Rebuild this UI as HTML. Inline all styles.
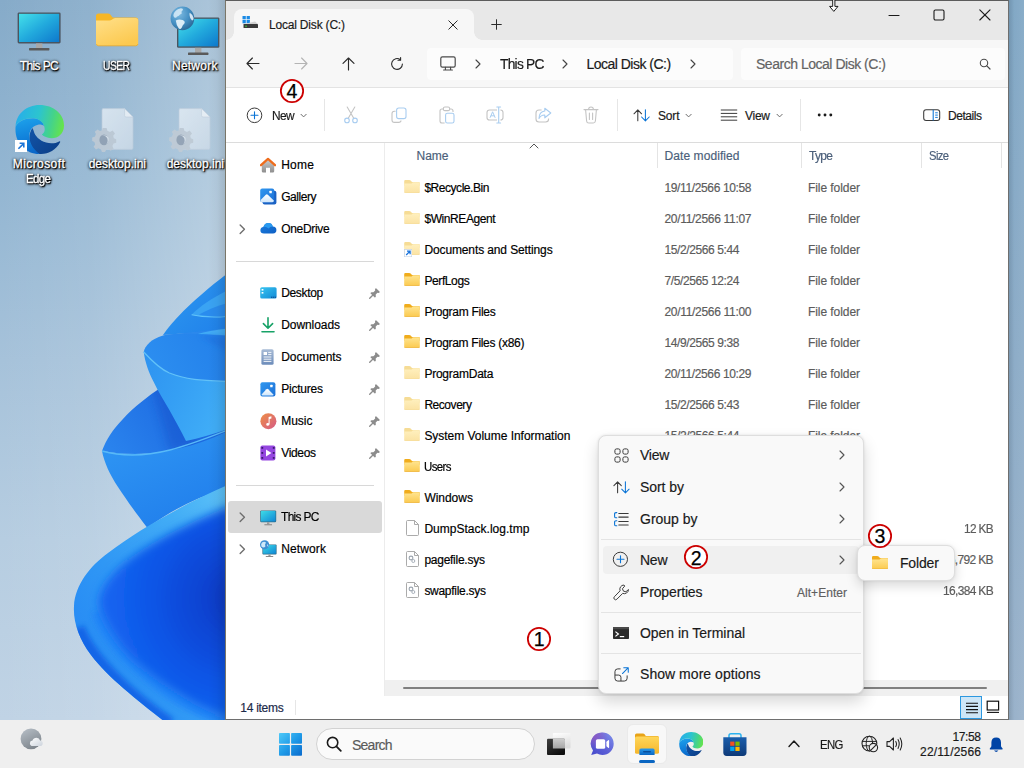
<!DOCTYPE html>
<html><head><meta charset="utf-8"><title>Local Disk (C:)</title>
<style>
html,body{margin:0;padding:0;}
body{width:1024px;height:768px;overflow:hidden;position:relative;font-family:'Liberation Sans', sans-serif;background:#9ab9d3;-webkit-text-stroke:0.18px currentColor;}
div,svg{box-sizing:border-box;}
.abs{position:absolute;}
</style></head><body>

<div class="abs" style="left:0;top:0;width:1024px;height:720px;background:linear-gradient(180deg,#86abc9 0%,#93b6d2 25%,#a6c2da 50%,#b6cde1 75%,#c0d3e5 100%);"></div>
<div class="abs" style="left:0;top:0;width:226px;height:720px;background:linear-gradient(90deg,rgba(255,255,255,0) 0%,rgba(255,255,255,0.08) 40%,rgba(255,255,255,0.33) 100%);"></div>
<svg class="abs" style="left:0;top:0" width="226" height="720" viewBox="0 0 226 720">
<defs>
<filter id="bl4" x="-20%" y="-20%" width="140%" height="140%"><feGaussianBlur stdDeviation="5"/></filter>
<filter id="bl2" x="-20%" y="-20%" width="140%" height="140%"><feGaussianBlur stdDeviation="2.5"/></filter>
<linearGradient id="pA" x1="0" y1="0" x2="1" y2="1"><stop offset="0" stop-color="#2f9af0"/><stop offset="1" stop-color="#1f80ea"/></linearGradient>
<linearGradient id="pBin" x1="0" y1="0.5" x2="1" y2="0.2"><stop offset="0" stop-color="#2c8ef0"/><stop offset="1" stop-color="#2380ea"/></linearGradient>
<linearGradient id="pBout" x1="0" y1="0" x2="1" y2="0.5"><stop offset="0" stop-color="#2e92f0"/><stop offset="0.5" stop-color="#359ff4"/><stop offset="1" stop-color="#40adf7"/></linearGradient>
<linearGradient id="pCin" x1="0" y1="0.7" x2="1" y2="0.3"><stop offset="0" stop-color="#2a84ee"/><stop offset="0.55" stop-color="#2070e4"/><stop offset="1" stop-color="#1a60d8"/></linearGradient>
<linearGradient id="pCout" x1="0" y1="0" x2="0.6" y2="1"><stop offset="0" stop-color="#3098f4"/><stop offset="1" stop-color="#217fec"/></linearGradient>
<linearGradient id="pDrim" x1="0" y1="0.75" x2="1" y2="0"><stop offset="0" stop-color="#2486f4"/><stop offset="0.35" stop-color="#2f97f5"/><stop offset="0.7" stop-color="#42adf6"/><stop offset="1" stop-color="#62c6f8"/></linearGradient>
<radialGradient id="pDin" gradientUnits="userSpaceOnUse" cx="238" cy="598" r="130"><stop offset="0" stop-color="#0836be"/><stop offset="0.32" stop-color="#0a45d4"/><stop offset="0.66" stop-color="#0d55e6"/><stop offset="1" stop-color="#1464f0"/></radialGradient>
<linearGradient id="shadow" x1="0" y1="0" x2="1" y2="0"><stop offset="0" stop-color="#000" stop-opacity="0"/><stop offset="0.5" stop-color="#000" stop-opacity="0.035"/><stop offset="1" stop-color="#000" stop-opacity="0.13"/></linearGradient>
<clipPath id="cD"><path d="M74 606 C75 585 90 566 108 553 C140 529 182 505 228 485 L228 722 L165 722 C140 702 108 678 91 655 C79 639 73 622 74 606 Z"/></clipPath>
<clipPath id="cC"><path d="M102 451 C106 440 113 429 122.5 419.4 C134 407 148 396 162 387 L205 400 L228 429 L228 436 C185 452 140 458 102 451 Z"/></clipPath>
</defs>
<!-- top petal A -->
<path d="M228 273 C212 285 192 302 178.7 316 C172 323 168 328 163 335 C185 333 207 332 228 330 Z" fill="url(#pA)"/>
<path d="M228 290 C214 297 200 306 191.6 314.7 C203 317.4 215 317.6 228 316.4 Z" fill="#3aa3f3"/>
<path d="M191.6 314.7 C203 317.4 215 317.6 228 316.4" fill="none" stroke="#63c4f9" stroke-width="1.1"/>
<path d="M228 303 C217 306 207 310 199 314.6 C208 316.6 218 316.8 228 316 Z" fill="#2a8cee"/>
<path d="M163 335 C185 333 207 331 228 328 L228 338 L170 338 Z" fill="#2b88ec"/>
<path d="M196 334.6 C206 331.6 217 329.6 228 328.6 L228 335.4 C217 334.4 206 334.2 196 334.6 Z" fill="#43acf6"/>
<!-- petal C inside (dark) -->
<g clip-path="url(#cC)">
<rect x="95" y="380" width="140" height="80" fill="url(#pCin)"/>
<path d="M150 380 L175 380 L200 445 L170 452 Z" fill="#174fc8" opacity="0.45" filter="url(#bl4)"/>
</g>
<!-- petal B outside body -->
<path d="M143.7 352 C145 362 149 373 153.7 382 C158 391 164 401 169.4 410 C175 420 181 431 186 441 C200 438 214 434 228 429 L228 381 C196 378 166 367 143.7 352 Z" fill="url(#pBout)"/>
<!-- petal B inside -->
<path d="M143.7 352 C145 346 151 339 163 335.6 C180 332.6 205 333.6 228 336.5 L228 381.4 C215 381 203 380.6 194.4 379.4 C185 378 177 376 169.4 373 C160 369 151 360 143.7 352 Z" fill="url(#pBin)"/>
<path d="M200 336 L228 337 L228 352 C218 346 208 341 200 336 Z" fill="#1d6fe0" opacity="0.55" filter="url(#bl2)"/><path d="M143.7 352 C151 360 160 369 169.4 373 C177 376 185 378 194.4 379.4 C203 380.6 215 381 228 381.4" fill="none" stroke="#62c2f8" stroke-width="1.3"/>
<!-- petal C outside body -->
<path d="M102 451 C140 458 185 452 228 431 L228 488 C195 498 168 512 147.5 528 C135 512 126 499 118 487 C110 475 104 462 102 451 Z" fill="url(#pCout)"/>
<path d="M102 451 C125 457.5 150 455 170 450 C190 445 210 437 228 430" fill="none" stroke="#58baf8" stroke-width="1.3"/>
<!-- petal D big -->
<g clip-path="url(#cD)">
<rect x="60" y="470" width="170" height="260" fill="url(#pDrim)"/>
<path d="M78 628 C90 658 124 692 170 724" fill="none" stroke="#0e58e2" stroke-width="13" opacity="0.75" filter="url(#bl2)"/>
<path d="M97 612 C106 640 138 672 176 698 C196 710 214 718 232 724" fill="none" stroke="#2384f7" stroke-width="11" opacity="0.8" filter="url(#bl2)"/>
<path d="M99 603 C100 585 118 566 142 550 C170 532 200 518 232 505 L232 722 L226 718 C212 712 200 707 191 702 C176 693 163 685 152 676 C138 665 126 654 118 642 C108 628 101 615 99 603 Z" fill="url(#pDin)" filter="url(#bl4)"/>
</g>
<rect x="208" y="0" width="18" height="720" fill="url(#shadow)"/>
</svg>
<div class="abs" style="left:1009px;top:0;width:15px;height:720px;background:linear-gradient(90deg,rgba(0,0,0,0.10),rgba(0,0,0,0) 35%),linear-gradient(90deg,rgba(255,255,255,0),rgba(255,255,255,0.08)),linear-gradient(180deg,#7fa6c4 0%,#8aaac6 50%,#97b0c9 100%);"></div>
<svg class="abs" style="left:17px;top:12px;" width="45" height="40" viewBox="0 0 45 40"><defs><linearGradient id="bpc" x1="0" y1="0" x2="1" y2="1"><stop offset="0" stop-color="#44e0ea"/><stop offset="0.5" stop-color="#22aadd"/><stop offset="1" stop-color="#0e78cc"/></linearGradient></defs><rect x="0.6" y="0.4" width="43" height="31" rx="1.4" fill="#4a5560"/><rect x="2" y="1.8" width="40.2" height="28.2" fill="url(#bpc)"/><rect x="19" y="31.4" width="6.4" height="5" fill="#a8a8a8"/><rect x="12" y="36" width="20.4" height="2.4" rx="0.6" fill="#5a5a5a"/></svg><div style="position:absolute;left:19.8px;top:57.6px;font-size:12px;line-height:16px;letter-spacing:-0.615px;color:#fff;font-weight:normal;white-space:pre;text-shadow:1px 1px 1px #000,1px 1px 2px #000,0 0 3px rgba(0,0,0,0.85),0 1px 3px rgba(0,0,0,0.8);-webkit-text-stroke:0.3px #fff;">This PC</div><svg class="abs" style="left:96px;top:13px;" width="43" height="34" viewBox="0 0 43 34"><defs><linearGradient id="uf" x1="0" y1="0" x2="0.6" y2="1"><stop offset="0" stop-color="#ffe08a"/><stop offset="1" stop-color="#fcc950"/></linearGradient></defs><path d="M0 3 Q0 0.4 2.6 0.4 H12 Q13.4 0.4 14.3 1.5 L16.6 4.6 H39.6 Q42.2 4.6 42.2 7.2 V12 H0 Z" fill="#f7b625"/><path d="M0 7.6 H13.4 Q14.8 7.6 15.8 6.8 L17.2 5.7 Q18.2 4.9 19.6 4.9 H39.6 Q42.2 5 42.2 7.6 V30.2 Q42.2 32.8 39.6 32.8 H2.6 Q0 32.8 0 30.2 Z" fill="url(#uf)"/><path d="M0.4 31 Q1 32.8 2.6 32.8 H39.6 Q41.4 32.8 42 31" fill="none" stroke="#e9a92a" stroke-width="0.8"/></svg><div style="position:absolute;left:103.0px;top:57.6px;font-size:12px;line-height:16px;letter-spacing:-0.660px;color:#fff;font-weight:normal;white-space:pre;transform:scaleX(0.8609);transform-origin:0 50%;text-shadow:1px 1px 1px #000,1px 1px 2px #000,0 0 3px rgba(0,0,0,0.85),0 1px 3px rgba(0,0,0,0.8);-webkit-text-stroke:0.3px #fff;">USER</div><svg class="abs" style="left:170px;top:6px;" width="50" height="50" viewBox="0 0 50 50"><defs><radialGradient id="gl" cx="0.35" cy="0.3" r="0.8"><stop offset="0" stop-color="#7fbce2"/><stop offset="0.55" stop-color="#4590c4"/><stop offset="1" stop-color="#27628f"/></radialGradient></defs><rect x="7" y="11.4" width="42.4" height="30.4" rx="1.4" fill="#4a5560"/><rect x="8.4" y="12.8" width="39.6" height="27.6" fill="url(#bpc)"/><rect x="25" y="41.8" width="6.4" height="5.4" fill="#a8a8a8"/><rect x="18" y="46.6" width="20.4" height="2.4" rx="0.6" fill="#5a5a5a"/><circle cx="12.4" cy="12.4" r="11.8" fill="url(#gl)"/><path d="M3.6 8 Q5.4 3.6 10 2.4 Q13.4 2 13 4 Q11 5 11.6 6.6 Q12.4 8 10 8.6 Q9 10.6 7 10.4 Q6.4 12.4 4.4 11.6 Q2.8 10 3.6 8 Z" fill="#d8ecf8" opacity="0.85"/><path d="M5.8 14.4 Q9 12.6 12.6 14 Q15.6 15.4 14.4 17.4 Q12.6 19 11.8 21.4 Q10.6 23.6 8.8 22.6 Q6.4 19.6 5.8 14.4 Z" fill="#e8f4fb" opacity="0.92"/><path d="M19.8 6.8 Q22.8 8.6 23.6 12 Q23.8 14.6 22 14.4 Q19.8 12.4 19.6 9.4 Q19.2 7.6 19.8 6.8 Z" fill="#e4f1fa" opacity="0.9"/></svg><div style="position:absolute;left:172.0px;top:57.6px;font-size:12px;line-height:16px;letter-spacing:0.231px;color:#fff;font-weight:normal;white-space:pre;text-shadow:1px 1px 1px #000,1px 1px 2px #000,0 0 3px rgba(0,0,0,0.85),0 1px 3px rgba(0,0,0,0.8);-webkit-text-stroke:0.3px #fff;">Network</div><svg class="abs" style="left:14.6px;top:105px;" width="49" height="49" viewBox="0 0 48 48"><defs>
<linearGradient id="E1" x1="0" y1="0" x2="1" y2="0.8"><stop offset="0" stop-color="#1254a8"/><stop offset="1" stop-color="#0c3f88"/></linearGradient>
<linearGradient id="E2" x1="0.3" y1="0" x2="0.5" y2="1"><stop offset="0" stop-color="#1da0ea"/><stop offset="0.5" stop-color="#1183dc"/><stop offset="1" stop-color="#0a66c8"/></linearGradient>
<linearGradient id="E3" x1="0" y1="0.4" x2="1" y2="0.55"><stop offset="0" stop-color="#27aeea"/><stop offset="0.45" stop-color="#2cc4cf"/><stop offset="0.75" stop-color="#45d389"/><stop offset="1" stop-color="#66e44a"/></linearGradient>
</defs>
<path d="M17 22.6 C15 25.5 13.6 30 14.2 34.5 C15.5 42.5 21 47.5 24 47.9 C32 48.5 40 44.5 44.2 36.5 C44.6 35.6 43.9 35.2 43.2 35.7 C40 37.6 35 38.2 30.5 36.8 C24 34.8 19.4 30 18.4 25.6 C18.1 24.4 17.6 23.4 17 22.6 Z" fill="url(#E1)"/>
<path d="M0.6 21 C3 16 10 12.6 18.5 13 C23.5 13.4 27.5 16.5 28.6 20.5 C27 19.4 24.6 18.8 22.5 19.3 C18.5 20 15.2 23 14.4 27 C13 34 16 42 24 47.9 C10 48 -1 36 0.6 21 Z" fill="url(#E2)"/>
<path d="M0.6 21 C1 9 11 0 24 0 C38 0 48 9 48 20 C48 28 42 32.5 36 32.5 C31 32.5 27.5 30.5 26.3 29 C28.5 27.5 29.5 25 29 22.5 C28.3 17 23.5 13.4 18.5 13 C10 12.6 3 16 0.6 21 Z" fill="url(#E3)"/></svg><svg class="abs" style="left:15px;top:140px;" width="12" height="12" viewBox="0 0 12 12"><rect x="0" y="0" width="12" height="12" fill="#fff"/><path d="M3.4 8.8 L8.6 3.6 M4.6 3.2 H8.8 V7.4" fill="none" stroke="#1a74d8" stroke-width="1.6"/></svg><div style="position:absolute;left:12.8px;top:156.0px;font-size:12px;line-height:16px;letter-spacing:0.414px;color:#fff;font-weight:normal;white-space:pre;text-shadow:1px 1px 1px #000,1px 1px 2px #000,0 0 3px rgba(0,0,0,0.85),0 1px 3px rgba(0,0,0,0.8);-webkit-text-stroke:0.3px #fff;">Microsoft</div><div style="position:absolute;left:26.3px;top:171.2px;font-size:12px;line-height:16px;letter-spacing:-0.660px;color:#fff;font-weight:normal;white-space:pre;transform:scaleX(0.9596);transform-origin:0 50%;text-shadow:1px 1px 1px #000,1px 1px 2px #000,0 0 3px rgba(0,0,0,0.85),0 1px 3px rgba(0,0,0,0.8);-webkit-text-stroke:0.3px #fff;">Edge</div><svg class="abs" style="left:91.6px;top:108px;" width="42" height="46" viewBox="0 0 42 46"><defs><linearGradient id="pg" x1="0" y1="0" x2="1" y2="1"><stop offset="0" stop-color="#e4edf5"/><stop offset="1" stop-color="#cddbe8"/></linearGradient></defs><g opacity="0.82"><path d="M10 2 Q10 0.6 11.4 0.6 H32.6 L41 9 V40 Q41 41.4 39.6 41.4 H11.4 Q10 41.4 10 40 Z" fill="url(#pg)" stroke="#c2cfdc" stroke-width="0.7"/><path d="M32.6 0.6 V7.6 Q32.6 9 34 9 H41 Z" fill="#f2f6fa" stroke="#c2cfdc" stroke-width="0.6"/><g transform="translate(12.6,31.3)"><path d="M-2 -11.4 H2 L2.8 -8.6 L5.4 -7.4 L8 -8.8 L10.4 -5.8 L8.6 -3.6 L9.2 -1 L11.6 0 V3.4 L9 4.2 L7.8 6.8 L9 9.4 L6 11.4 L3.8 9.8 L1.6 10.4 L0.4 12.8 H-2.6 L-3.6 10.2 L-6.2 9 L-8.6 10.2 L-11 7.4 L-9.4 5.2 L-10.2 2.6 L-12.4 1.6 V-1.8 L-9.8 -2.6 L-8.6 -5.2 L-9.8 -7.6 L-7 -9.8 L-4.8 -8.2 L-2.6 -8.8 Z" fill="#c3ccd5"/><ellipse cx="-0.6" cy="0.6" rx="4.6" ry="5.4" fill="#8f9daf"/><path d="M-3 -4 Q1 -4 2.6 -1 Q4 3 1 5.6 Q4.8 3 4.2 -1 Q3.2 -4.6 -3 -4Z" fill="#dfe6ec"/></g></g></svg><svg class="abs" style="left:169px;top:108px;" width="42" height="46" viewBox="0 0 42 46"><defs><linearGradient id="pg" x1="0" y1="0" x2="1" y2="1"><stop offset="0" stop-color="#e4edf5"/><stop offset="1" stop-color="#cddbe8"/></linearGradient></defs><g opacity="0.82"><path d="M10 2 Q10 0.6 11.4 0.6 H32.6 L41 9 V40 Q41 41.4 39.6 41.4 H11.4 Q10 41.4 10 40 Z" fill="url(#pg)" stroke="#c2cfdc" stroke-width="0.7"/><path d="M32.6 0.6 V7.6 Q32.6 9 34 9 H41 Z" fill="#f2f6fa" stroke="#c2cfdc" stroke-width="0.6"/><g transform="translate(12.6,31.3)"><path d="M-2 -11.4 H2 L2.8 -8.6 L5.4 -7.4 L8 -8.8 L10.4 -5.8 L8.6 -3.6 L9.2 -1 L11.6 0 V3.4 L9 4.2 L7.8 6.8 L9 9.4 L6 11.4 L3.8 9.8 L1.6 10.4 L0.4 12.8 H-2.6 L-3.6 10.2 L-6.2 9 L-8.6 10.2 L-11 7.4 L-9.4 5.2 L-10.2 2.6 L-12.4 1.6 V-1.8 L-9.8 -2.6 L-8.6 -5.2 L-9.8 -7.6 L-7 -9.8 L-4.8 -8.2 L-2.6 -8.8 Z" fill="#c3ccd5"/><ellipse cx="-0.6" cy="0.6" rx="4.6" ry="5.4" fill="#8f9daf"/><path d="M-3 -4 Q1 -4 2.6 -1 Q4 3 1 5.6 Q4.8 3 4.2 -1 Q3.2 -4.6 -3 -4Z" fill="#dfe6ec"/></g></g></svg><div style="position:absolute;left:88.7px;top:156.0px;font-size:12px;line-height:16px;letter-spacing:-0.008px;color:#fff;font-weight:normal;white-space:pre;text-shadow:1px 1px 1px #000,1px 1px 2px #000,0 0 3px rgba(0,0,0,0.85),0 1px 3px rgba(0,0,0,0.8);-webkit-text-stroke:0.3px #fff;">desktop.ini</div><div class="abs" style="left:160px;top:150px;width:66px;height:30px;overflow:hidden;"><div style="position:absolute;left:6.7px;top:6.0px;font-size:12px;line-height:16px;letter-spacing:-0.008px;color:#fff;font-weight:normal;white-space:pre;text-shadow:1px 1px 1px #000,1px 1px 2px #000,0 0 3px rgba(0,0,0,0.85),0 1px 3px rgba(0,0,0,0.8);-webkit-text-stroke:0.3px #fff;">desktop.ini</div></div><svg width="0" height="0" style="position:absolute"><defs>
<linearGradient id="fb" x1="0" y1="0" x2="0" y2="1"><stop offset="0" stop-color="#ffe592"/><stop offset="1" stop-color="#fbca50"/></linearGradient>
<linearGradient id="fbh" x1="0" y1="0" x2="0" y2="1"><stop offset="0" stop-color="#fff0bf"/><stop offset="1" stop-color="#fbe3a4"/></linearGradient>
</defs></svg><div class="abs" style="left:225px;top:0;width:784px;height:720px;background:#fff;border:1px solid #6e6e6e;border-top-color:#5c5c5c;border-left-color:#7a7668;"></div><div class="abs" style="left:226px;top:1px;width:782px;height:39px;background:#e8e8e8;"></div><div class="abs" style="left:234px;top:9px;width:240px;height:31px;background:#f7f7f7;border-radius:8px 8px 0 0;"></div><div class="abs" style="left:226px;top:32px;width:8px;height:8px;background:radial-gradient(circle at 0 0,#e8e8e8 7.5px,#f7f7f7 8px);"></div><div class="abs" style="left:474px;top:32px;width:8px;height:8px;background:radial-gradient(circle at 100% 0,#e8e8e8 7.5px,#f7f7f7 8px);"></div><svg class="abs" style="left:242px;top:15px;" width="17" height="14" viewBox="0 0 17 14"><rect x="0.5" y="1" width="3.3" height="3.3" fill="#1a8ae5"/><rect x="4.6" y="1" width="3.3" height="3.3" fill="#1a8ae5"/><rect x="0.5" y="5" width="3.3" height="3.3" fill="#1a8ae5"/><rect x="4.6" y="5" width="3.3" height="3.3" fill="#1a8ae5"/><path d="M2 9 L13 6.5 L16 9 Z" fill="#d0d0d0"/><rect x="1.5" y="9" width="14.5" height="4" rx="0.6" fill="#3a3a3a"/><rect x="3.2" y="10.6" width="1.6" height="1.2" fill="#35d03a"/></svg><div style="position:absolute;left:269.0px;top:16.5px;font-size:12px;line-height:16px;letter-spacing:-0.192px;color:#1a1a1a;font-weight:normal;white-space:pre;">Local Disk (C:)</div><svg class="abs" style="left:447.5px;top:19.5px;" width="10" height="10" viewBox="0 0 10 10"><path d="M0.8 0.8 L9.2 9.2 M9.2 0.8 L0.8 9.2" stroke="#2b2b2b" stroke-width="1" stroke-linecap="round"/></svg><svg class="abs" style="left:491px;top:19.4px;" width="11" height="11" viewBox="0 0 11 11"><path d="M5.5 0.7 V10.3 M0.7 5.5 H10.3" stroke="#2b2b2b" stroke-width="1" stroke-linecap="round"/></svg><svg class="abs" style="left:888px;top:10px;" width="12" height="12" viewBox="0 0 12 12"><path d="M1 5.5 H11" stroke="#1a1a1a" stroke-width="1.1" stroke-linecap="round"/></svg><svg class="abs" style="left:933px;top:9px;" width="12" height="12" viewBox="0 0 12 12"><rect x="1" y="1" width="10" height="10" rx="1.4" fill="none" stroke="#1a1a1a" stroke-width="1.1"/></svg><svg class="abs" style="left:979px;top:9px;" width="12" height="12" viewBox="0 0 12 12"><path d="M0.8 0.8 L11 11 M11 0.8 L0.8 11" stroke="#1a1a1a" stroke-width="1.1" stroke-linecap="round"/></svg><svg class="abs" style="left:828px;top:0px;" width="12" height="13" viewBox="0 0 12 13"><path d="M4.7 -1 L4.7 6.4 L1.6 6.4 L5.8 11.4 L10 6.4 L6.9 6.4 L6.9 -1 Z" fill="#fff" stroke="#111" stroke-width="0.95"/></svg><div class="abs" style="left:226px;top:40px;width:782px;height:47px;background:#f7f7f7;"></div><div class="abs" style="left:226px;top:87px;width:782px;height:1px;background:#e3e3e3;"></div><svg class="abs" style="left:246px;top:57px;" width="14" height="13" viewBox="0 0 14 13"><path d="M13 6.5 H1.2 M6.4 1 L1 6.5 L6.4 12" fill="none" stroke="#2a2a2a" stroke-width="1.15" stroke-linecap="round" stroke-linejoin="round"/></svg><svg class="abs" style="left:294px;top:57px;" width="14" height="13" viewBox="0 0 14 13"><path d="M1 6.5 H12.8 M7.6 1 L13 6.5 L7.6 12" fill="none" stroke="#b4b4b4" stroke-width="1.15" stroke-linecap="round" stroke-linejoin="round"/></svg><svg class="abs" style="left:342px;top:57px;" width="13" height="14" viewBox="0 0 13 14"><path d="M6.5 13 V1.2 M1 6.4 L6.5 1 L12 6.4" fill="none" stroke="#2a2a2a" stroke-width="1.15" stroke-linecap="round" stroke-linejoin="round"/></svg><svg class="abs" style="left:390px;top:57px;" width="14" height="14" viewBox="0 0 14 14"><path d="M12.4 7 A5.4 5.4 0 1 1 10.3 2.7" fill="none" stroke="#2a2a2a" stroke-width="1.1" stroke-linecap="round"/><path d="M10.6 0.6 L10.6 3.2 L8 3.2" fill="none" stroke="#2a2a2a" stroke-width="1.1" stroke-linecap="round" stroke-linejoin="round"/></svg><div class="abs" style="left:427px;top:48px;width:306px;height:32px;background:#fcfcfc;border-radius:4px;"></div><div class="abs" style="left:741px;top:48px;width:264px;height:32px;background:#fcfcfc;border-radius:4px;"></div><svg class="abs" style="left:440px;top:56px;" width="16" height="15" viewBox="0 0 16 15"><rect x="0.8" y="0.8" width="14.4" height="10.4" rx="1.6" fill="none" stroke="#4a4a4a" stroke-width="1.2"/><path d="M5.4 11.4 V13.6 M10.6 11.4 V13.6 M3.6 14 H12.4" stroke="#4a4a4a" stroke-width="1.1" fill="none" stroke-linecap="round"/></svg><svg class="abs" style="left:473.5px;top:59px;" width="8" height="10" viewBox="0 0 8 10"><path d="M2.0 1 L6.0 5 L2.0 9" fill="none" stroke="#444" stroke-width="1.1" stroke-linecap="round" stroke-linejoin="round"/></svg><div style="position:absolute;left:500.0px;top:55.0px;font-size:14px;line-height:18px;letter-spacing:-0.770px;color:#1a1a1a;font-weight:normal;white-space:pre;transform:scaleX(0.9850);transform-origin:0 50%;">This PC</div><svg class="abs" style="left:560.8px;top:59px;" width="8" height="10" viewBox="0 0 8 10"><path d="M2.0 1 L6.0 5 L2.0 9" fill="none" stroke="#444" stroke-width="1.1" stroke-linecap="round" stroke-linejoin="round"/></svg><div style="position:absolute;left:586.5px;top:55.0px;font-size:14px;line-height:18px;letter-spacing:-0.514px;color:#1a1a1a;font-weight:normal;white-space:pre;">Local Disk (C:)</div><svg class="abs" style="left:689px;top:59px;" width="8" height="10" viewBox="0 0 8 10"><path d="M2.0 1 L6.0 5 L2.0 9" fill="none" stroke="#444" stroke-width="1.1" stroke-linecap="round" stroke-linejoin="round"/></svg><div style="position:absolute;left:756.0px;top:55.0px;font-size:14px;line-height:18px;letter-spacing:-0.478px;color:#636363;font-weight:normal;white-space:pre;">Search Local Disk (C:)</div><svg class="abs" style="left:979px;top:58px;" width="12" height="12" viewBox="0 0 12 12"><circle cx="5" cy="5" r="3.7" fill="none" stroke="#4a4a4a" stroke-width="1.1"/><path d="M7.8 7.8 L11 11" stroke="#4a4a4a" stroke-width="1.2" stroke-linecap="round"/></svg><div class="abs" style="left:226px;top:142px;width:782px;height:1px;background:#dcdcdc;"></div><svg class="abs" style="left:246px;top:107px;" width="17" height="17" viewBox="0 0 17 17"><circle cx="8.5" cy="8.3" r="7.3" fill="none" stroke="#3a3a3a" stroke-width="1"/><path d="M8.5 4.8 V11.8 M5 8.3 H12" stroke="#0a74d6" stroke-width="1.1" stroke-linecap="round"/></svg><div style="position:absolute;left:272.0px;top:107.5px;font-size:12px;line-height:16px;letter-spacing:-0.660px;color:#1a1a1a;font-weight:normal;white-space:pre;transform:scaleX(0.9914);transform-origin:0 50%;">New</div><svg class="abs" style="left:300.4px;top:112.9px;" width="7.2" height="5.2" viewBox="0 0 7.2 5.2"><path d="M1 1.3 L3.6 3.9000000000000004 L6.2 1.3" fill="none" stroke="#6a6a6a" stroke-width="1" stroke-linecap="round" stroke-linejoin="round"/></svg><div class="abs" style="left:324px;top:99px;width:1px;height:32px;background:#e6e6e6;"></div><svg class="abs" style="left:343px;top:106px;" width="16" height="18" viewBox="0 0 16 18"><path d="M4.2 1 L10.6 12 M11.8 1 L5.4 12" stroke="#c4c4c4" stroke-width="1.1" stroke-linecap="round"/><circle cx="4" cy="14.4" r="2.3" fill="none" stroke="#a9cdf0" stroke-width="1.1"/><circle cx="12" cy="14.4" r="2.3" fill="none" stroke="#a9cdf0" stroke-width="1.1"/></svg><svg class="abs" style="left:391px;top:107px;" width="16" height="17" viewBox="0 0 16 17"><path d="M4.6 4.2 H3.4 Q1 4.2 1 6.6 V13 Q1 15.4 3.4 15.4 H7.6 Q10 15.4 10 13.6" fill="none" stroke="#c4c4c4" stroke-width="1.1"/><rect x="5.6" y="1" width="9.4" height="10.6" rx="2.2" fill="none" stroke="#a9cdf0" stroke-width="1.1"/></svg><svg class="abs" style="left:439px;top:106px;" width="16" height="18" viewBox="0 0 16 18"><path d="M4.4 3 H3 Q1 3 1 5 V15 Q1 17 3 17 H5.6" fill="none" stroke="#c4c4c4" stroke-width="1.1"/><path d="M10.6 3 H12 Q14 3 14 5 V6" fill="none" stroke="#c4c4c4" stroke-width="1.1"/><rect x="4.4" y="1" width="6.2" height="3.6" rx="1.4" fill="none" stroke="#c4c4c4" stroke-width="1.1"/><rect x="6.6" y="7.2" width="8.4" height="9.8" rx="1.8" fill="none" stroke="#a9cdf0" stroke-width="1.1"/></svg><svg class="abs" style="left:486px;top:106px;" width="18" height="18" viewBox="0 0 18 18"><path d="M11 4 H3.6 Q1 4 1 6.6 V11.4 Q1 14 3.6 14 H11 M14.4 4 Q17 4 17 6.6 V11.4 Q17 14 14.4 14" fill="none" stroke="#c4c4c4" stroke-width="1.1"/><path d="M12.7 1.4 V16.6 M10.8 1 H14.6 M10.8 17 H14.6" stroke="#a9cdf0" stroke-width="1.1" fill="none" stroke-linecap="round"/><path d="M4 11.8 L6.6 5.8 L9.2 11.8 M4.9 9.8 H8.3" fill="none" stroke="#a9cdf0" stroke-width="1"/></svg><svg class="abs" style="left:535px;top:107px;" width="17" height="16" viewBox="0 0 17 16"><path d="M6.6 3 H4 Q1 3 1 6 V12 Q1 15 4 15 H10.6 Q13.6 15 13.6 12 V11.4" fill="none" stroke="#c4c4c4" stroke-width="1.1"/><path d="M9.8 1.2 L15.8 6 L9.8 10.8 V8 Q6 7.8 4 11.4 Q4.2 4.6 9.8 4 Z" fill="none" stroke="#a9cdf0" stroke-width="1.1" stroke-linejoin="round"/></svg><svg class="abs" style="left:583px;top:106px;" width="16" height="18" viewBox="0 0 16 18"><path d="M1 3.6 H15 M5.6 3.4 Q5.6 1 8 1 Q10.4 1 10.4 3.4 M2.6 3.8 L3.6 15 Q3.8 17 5.8 17 H10.2 Q12.2 17 12.4 15 L13.4 3.8 M6.4 7 V13.4 M9.6 7 V13.4" fill="none" stroke="#c4c4c4" stroke-width="1.1" stroke-linecap="round"/></svg><div class="abs" style="left:617px;top:99px;width:1px;height:32px;background:#e6e6e6;"></div><svg class="abs" style="left:633px;top:109.4px;" width="18" height="13" viewBox="0 0 18 13"><path d="M4.8 11.8 V1.2 M1 4.8 L4.8 0.9 L8.6 4.8" fill="none" stroke="#3a3a3a" stroke-width="1.05" stroke-linecap="round" stroke-linejoin="round"/><path d="M12.4 0.8 V11.6 M8.6 8 L12.4 11.9 L16.2 8" fill="none" stroke="#0a74d6" stroke-width="1.05" stroke-linecap="round" stroke-linejoin="round"/></svg><div style="position:absolute;left:658.0px;top:107.5px;font-size:12px;line-height:16px;letter-spacing:-0.172px;color:#1a1a1a;font-weight:normal;white-space:pre;">Sort</div><svg class="abs" style="left:685.4px;top:112.9px;" width="7.2" height="5.2" viewBox="0 0 7.2 5.2"><path d="M1 1.3 L3.6 3.9000000000000004 L6.2 1.3" fill="none" stroke="#6a6a6a" stroke-width="1" stroke-linecap="round" stroke-linejoin="round"/></svg><svg class="abs" style="left:720px;top:109px;" width="18" height="12" viewBox="0 0 18 12"><path d="M0.8 1 H17.2 M0.8 4.4 H17.2 M0.8 7.8 H17.2 M0.8 11.2 H17.2" stroke="#3a3a3a" stroke-width="1"/></svg><div style="position:absolute;left:745.0px;top:107.5px;font-size:12px;line-height:16px;letter-spacing:-0.266px;color:#1a1a1a;font-weight:normal;white-space:pre;">View</div><svg class="abs" style="left:776.1px;top:112.9px;" width="7.2" height="5.2" viewBox="0 0 7.2 5.2"><path d="M1 1.3 L3.6 3.9000000000000004 L6.2 1.3" fill="none" stroke="#6a6a6a" stroke-width="1" stroke-linecap="round" stroke-linejoin="round"/></svg><div class="abs" style="left:800px;top:99px;width:1px;height:32px;background:#e6e6e6;"></div><svg class="abs" style="left:817px;top:113.4px;" width="16" height="4" viewBox="0 0 16 4"><circle cx="2.2" cy="2" r="1.45" fill="#1a1a1a"/><circle cx="8" cy="2" r="1.45" fill="#1a1a1a"/><circle cx="13.8" cy="2" r="1.45" fill="#1a1a1a"/></svg><svg class="abs" style="left:922.6px;top:109.4px;" width="18" height="12.4" viewBox="0 0 18 12.4"><rect x="0.7" y="0.7" width="16" height="10.8" rx="2.4" fill="none" stroke="#3a3a3a" stroke-width="1.05"/><path d="M10.2 0.8 V11.4" stroke="#0a74d6" stroke-width="1.05"/><path d="M12.2 3.8 H14.8 M12.2 6.1 H14.8 M12.2 8.4 H14.8" stroke="#0a74d6" stroke-width="0.95"/></svg><div style="position:absolute;left:948.0px;top:107.5px;font-size:12px;line-height:16px;letter-spacing:-0.448px;color:#1a1a1a;font-weight:normal;white-space:pre;">Details</div><div class="abs" style="left:384px;top:143px;width:1px;height:553px;background:#ececec;"></div><div class="abs" style="left:228px;top:501px;width:154px;height:32px;background:#d9d9d9;border-radius:3px;"></div><div class="abs" style="left:236px;top:261px;width:138px;height:1px;background:#d8d8d8;"></div><div class="abs" style="left:236px;top:485px;width:138px;height:1px;background:#d8d8d8;"></div><div style="position:absolute;left:281.2px;top:156.5px;font-size:12px;line-height:16px;letter-spacing:0.261px;color:#000;font-weight:normal;white-space:pre;">Home</div><div style="position:absolute;left:281.2px;top:188.5px;font-size:12px;line-height:16px;letter-spacing:-0.436px;color:#000;font-weight:normal;white-space:pre;">Gallery</div><div style="position:absolute;left:281.2px;top:220.5px;font-size:12px;line-height:16px;letter-spacing:-0.312px;color:#000;font-weight:normal;white-space:pre;">OneDrive</div><div style="position:absolute;left:281.2px;top:284.5px;font-size:12px;line-height:16px;letter-spacing:-0.339px;color:#000;font-weight:normal;white-space:pre;">Desktop</div><div style="position:absolute;left:281.2px;top:316.5px;font-size:12px;line-height:16px;letter-spacing:-0.072px;color:#000;font-weight:normal;white-space:pre;">Downloads</div><div style="position:absolute;left:281.2px;top:348.5px;font-size:12px;line-height:16px;letter-spacing:-0.038px;color:#000;font-weight:normal;white-space:pre;">Documents</div><div style="position:absolute;left:281.2px;top:380.5px;font-size:12px;line-height:16px;letter-spacing:-0.237px;color:#000;font-weight:normal;white-space:pre;">Pictures</div><div style="position:absolute;left:281.2px;top:412.5px;font-size:12px;line-height:16px;letter-spacing:-0.011px;color:#000;font-weight:normal;white-space:pre;">Music</div><div style="position:absolute;left:281.2px;top:444.5px;font-size:12px;line-height:16px;letter-spacing:-0.337px;color:#000;font-weight:normal;white-space:pre;">Videos</div><div style="position:absolute;left:281.2px;top:508.5px;font-size:12px;line-height:16px;letter-spacing:-0.660px;color:#000;font-weight:normal;white-space:pre;transform:scaleX(0.9941);transform-origin:0 50%;">This PC</div><div style="position:absolute;left:281.2px;top:540.5px;font-size:12px;line-height:16px;letter-spacing:0.131px;color:#000;font-weight:normal;white-space:pre;">Network</div><svg class="abs" style="left:368.5px;top:287.5px;" width="11" height="11" viewBox="0 0 11 11"><path d="M6.4 0.5 Q6.9 0 7.4 0.5 L10.5 3.6 Q11 4.1 10.5 4.6 L9.6 5 L8.5 4.8 L6.7 6.6 L6.8 8.4 Q6.8 9 6.3 9.3 L5.7 9.6 L1.4 5.3 L1.7 4.7 Q2 4.2 2.6 4.2 L4.4 4.3 L6.2 2.5 L6 1.4 Z" fill="#8c8c8c"/><path d="M3.7 7.3 L0.7 10.3" stroke="#8c8c8c" stroke-width="1.3" stroke-linecap="round"/></svg><svg class="abs" style="left:368.5px;top:319.5px;" width="11" height="11" viewBox="0 0 11 11"><path d="M6.4 0.5 Q6.9 0 7.4 0.5 L10.5 3.6 Q11 4.1 10.5 4.6 L9.6 5 L8.5 4.8 L6.7 6.6 L6.8 8.4 Q6.8 9 6.3 9.3 L5.7 9.6 L1.4 5.3 L1.7 4.7 Q2 4.2 2.6 4.2 L4.4 4.3 L6.2 2.5 L6 1.4 Z" fill="#8c8c8c"/><path d="M3.7 7.3 L0.7 10.3" stroke="#8c8c8c" stroke-width="1.3" stroke-linecap="round"/></svg><svg class="abs" style="left:368.5px;top:351.5px;" width="11" height="11" viewBox="0 0 11 11"><path d="M6.4 0.5 Q6.9 0 7.4 0.5 L10.5 3.6 Q11 4.1 10.5 4.6 L9.6 5 L8.5 4.8 L6.7 6.6 L6.8 8.4 Q6.8 9 6.3 9.3 L5.7 9.6 L1.4 5.3 L1.7 4.7 Q2 4.2 2.6 4.2 L4.4 4.3 L6.2 2.5 L6 1.4 Z" fill="#8c8c8c"/><path d="M3.7 7.3 L0.7 10.3" stroke="#8c8c8c" stroke-width="1.3" stroke-linecap="round"/></svg><svg class="abs" style="left:368.5px;top:383.5px;" width="11" height="11" viewBox="0 0 11 11"><path d="M6.4 0.5 Q6.9 0 7.4 0.5 L10.5 3.6 Q11 4.1 10.5 4.6 L9.6 5 L8.5 4.8 L6.7 6.6 L6.8 8.4 Q6.8 9 6.3 9.3 L5.7 9.6 L1.4 5.3 L1.7 4.7 Q2 4.2 2.6 4.2 L4.4 4.3 L6.2 2.5 L6 1.4 Z" fill="#8c8c8c"/><path d="M3.7 7.3 L0.7 10.3" stroke="#8c8c8c" stroke-width="1.3" stroke-linecap="round"/></svg><svg class="abs" style="left:368.5px;top:415.5px;" width="11" height="11" viewBox="0 0 11 11"><path d="M6.4 0.5 Q6.9 0 7.4 0.5 L10.5 3.6 Q11 4.1 10.5 4.6 L9.6 5 L8.5 4.8 L6.7 6.6 L6.8 8.4 Q6.8 9 6.3 9.3 L5.7 9.6 L1.4 5.3 L1.7 4.7 Q2 4.2 2.6 4.2 L4.4 4.3 L6.2 2.5 L6 1.4 Z" fill="#8c8c8c"/><path d="M3.7 7.3 L0.7 10.3" stroke="#8c8c8c" stroke-width="1.3" stroke-linecap="round"/></svg><svg class="abs" style="left:368.5px;top:447.5px;" width="11" height="11" viewBox="0 0 11 11"><path d="M6.4 0.5 Q6.9 0 7.4 0.5 L10.5 3.6 Q11 4.1 10.5 4.6 L9.6 5 L8.5 4.8 L6.7 6.6 L6.8 8.4 Q6.8 9 6.3 9.3 L5.7 9.6 L1.4 5.3 L1.7 4.7 Q2 4.2 2.6 4.2 L4.4 4.3 L6.2 2.5 L6 1.4 Z" fill="#8c8c8c"/><path d="M3.7 7.3 L0.7 10.3" stroke="#8c8c8c" stroke-width="1.3" stroke-linecap="round"/></svg><svg class="abs" style="left:238.29999999999998px;top:224.0px;" width="8.6" height="10.6" viewBox="0 0 8.6 10.6"><path d="M2.15 1 L6.449999999999999 5.3 L2.15 9.6" fill="none" stroke="#6e6e6e" stroke-width="1.35" stroke-linecap="round" stroke-linejoin="round"/></svg><svg class="abs" style="left:238.29999999999998px;top:512.0px;" width="8.6" height="10.6" viewBox="0 0 8.6 10.6"><path d="M2.15 1 L6.449999999999999 5.3 L2.15 9.6" fill="none" stroke="#6e6e6e" stroke-width="1.35" stroke-linecap="round" stroke-linejoin="round"/></svg><svg class="abs" style="left:238.29999999999998px;top:544.0px;" width="8.6" height="10.6" viewBox="0 0 8.6 10.6"><path d="M2.15 1 L6.449999999999999 5.3 L2.15 9.6" fill="none" stroke="#6e6e6e" stroke-width="1.35" stroke-linecap="round" stroke-linejoin="round"/></svg><svg class="abs" style="left:260px;top:157px;" width="16" height="16" viewBox="0 0 16 16"><defs><linearGradient id="hg" x1="0" y1="0" x2="0" y2="1"><stop offset="0" stop-color="#c9c9c9"/><stop offset="1" stop-color="#8e8e8e"/></linearGradient></defs><path d="M1.8 8 V14.2 Q1.8 15.6 3.2 15.6 H6 V10.8 H10 V15.6 H12.8 Q14.2 15.6 14.2 14.2 V8 L8 3 Z" fill="url(#hg)"/><path d="M1 8.2 L8 1.9 L15 8.2" fill="none" stroke="#ee6c1c" stroke-width="2.3" stroke-linecap="round" stroke-linejoin="round"/></svg><svg class="abs" style="left:260px;top:188px;" width="17" height="17" viewBox="0 0 17 17"><rect x="2.6" y="2.8" width="13.8" height="13.6" rx="2" fill="#1a62c4"/><rect x="0.2" y="0.4" width="14" height="13.8" rx="2" fill="url(#pi)"/><path d="M0.4 12.2 L5.8 6.8 Q6.8 5.8 7.8 6.8 L14 12.8 Q13.8 14.2 12.4 14.2 H2.2 Q0.6 14.2 0.4 12.2 Z" fill="url(#mt)"/><rect x="9.4" y="2.8" width="2.4" height="2.4" rx="0.5" fill="#fff"/></svg><svg class="abs" style="left:260px;top:222px;" width="17" height="12" viewBox="0 0 17 12"><defs><linearGradient id="od" x1="0" y1="0" x2="1" y2="1"><stop offset="0" stop-color="#1b7fe0"/><stop offset="1" stop-color="#0f5fc4"/></linearGradient></defs><path d="M4 11.4 Q0.4 11.4 0.4 8.2 Q0.4 5.4 3.4 5 Q4.6 1 8.4 1 Q11.8 1 12.8 4.4 Q16.4 4.6 16.4 8 Q16.4 11.4 13 11.4 Z" fill="url(#od)"/><path d="M3.4 5 Q4.6 1 8.4 1 Q11.8 1 12.8 4.4 Q10 4.4 8.6 6.6 Q6 4.2 3.4 5Z" fill="#2a9af0"/></svg><svg class="abs" style="left:260px;top:287px;" width="17" height="12" viewBox="0 0 17 12"><defs><linearGradient id="dk" x1="0" y1="0" x2="1" y2="1"><stop offset="0" stop-color="#38c4f0"/><stop offset="1" stop-color="#118ad6"/></linearGradient></defs><rect x="0.2" y="0.2" width="16.4" height="11.4" rx="1.6" fill="url(#dk)"/><rect x="1.6" y="2" width="1.8" height="1.6" fill="#fff"/><rect x="1.6" y="5" width="1.8" height="1.6" fill="#fff"/><rect x="11" y="9.6" width="1.4" height="1.4" fill="#0b5aa0"/><rect x="13" y="9.6" width="1.4" height="1.4" fill="#0b5aa0"/><rect x="15" y="9.6" width="1" height="1.4" fill="#0b5aa0"/></svg><svg class="abs" style="left:261px;top:317px;" width="14" height="16" viewBox="0 0 14 16"><path d="M7 0.8 V11 M2.4 6.6 L7 11.2 L11.6 6.6" fill="none" stroke="#17a267" stroke-width="1.6" stroke-linecap="round" stroke-linejoin="round"/><path d="M1 14.8 H13" stroke="#17a267" stroke-width="1.6" stroke-linecap="round"/></svg><svg class="abs" style="left:261px;top:349px;" width="13" height="16" viewBox="0 0 13 16"><defs><linearGradient id="dc" x1="0" y1="0" x2="0" y2="1"><stop offset="0" stop-color="#a9bcd6"/><stop offset="1" stop-color="#6c8cba"/></linearGradient></defs><rect x="0.4" y="0.2" width="12.2" height="15.6" rx="1.6" fill="url(#dc)"/><rect x="2.6" y="3" width="3.4" height="3" fill="#fff"/><path d="M7.2 3.4 H10.4 M7.2 5.6 H10.4 M2.6 8 H10.4 M2.6 10.2 H10.4 M2.6 12.4 H10.4" stroke="#fff" stroke-width="0.9"/></svg><svg class="abs" style="left:260px;top:382px;" width="16" height="15" viewBox="0 0 16 15"><defs><linearGradient id="pi" x1="0" y1="0" x2="1" y2="1"><stop offset="0" stop-color="#3198f0"/><stop offset="1" stop-color="#1a6fd6"/></linearGradient><linearGradient id="mt" x1="0" y1="0" x2="0" y2="1"><stop offset="0" stop-color="#ffffff"/><stop offset="1" stop-color="#cfe6fb"/></linearGradient></defs><rect x="0.4" y="0.2" width="15" height="14.4" rx="2" fill="url(#pi)"/><path d="M1.6 12.4 L6.4 7.2 Q7.3 6.3 8.2 7.2 L13.6 12.8 Q13.4 13.4 12.6 13.4 H2.6 Q1.6 13.4 1.6 12.4 Z" fill="url(#mt)"/><rect x="10.2" y="2.8" width="2.4" height="2.4" rx="0.5" fill="#fff"/></svg><svg class="abs" style="left:259.5px;top:412.5px;" width="17" height="17" viewBox="0 0 17 17"><defs><linearGradient id="mu" x1="0" y1="0" x2="1" y2="1"><stop offset="0" stop-color="#ee8f45"/><stop offset="1" stop-color="#d55a86"/></linearGradient></defs><circle cx="8.4" cy="8.2" r="8" fill="url(#mu)"/><path d="M8.6 4 L11.4 3.2 V5.4 L9.6 6 V11 Q9.6 12.8 7.8 12.8 Q6.2 12.8 6.2 11.4 Q6.2 10 7.8 10 Q8.2 10 8.6 10.2 Z" fill="#fff"/></svg><svg class="abs" style="left:260px;top:445px;" width="16" height="16" viewBox="0 0 16 16"><rect x="0.4" y="0.4" width="15" height="15.2" rx="2" fill="#9547e0"/><path d="M6 4.6 L11.4 8 L6 11.4 Z" fill="#fff"/><rect x="1.4" y="2" width="1.8" height="1.8" fill="#3b1a70"/><rect x="1.4" y="7" width="1.8" height="1.8" fill="#3b1a70"/><rect x="1.4" y="12" width="1.8" height="1.8" fill="#3b1a70"/><rect x="12.8" y="2" width="1.8" height="1.8" fill="#3b1a70"/><rect x="12.8" y="7" width="1.8" height="1.8" fill="#3b1a70"/><rect x="12.8" y="12" width="1.8" height="1.8" fill="#3b1a70"/></svg><svg class="abs" style="left:260px;top:509.8px;" width="17" height="16" viewBox="0 0 17 16"><defs><linearGradient id="pc" x1="0" y1="0" x2="1" y2="1"><stop offset="0" stop-color="#3ddbe6"/><stop offset="1" stop-color="#0f86d6"/></linearGradient></defs><rect x="0.2" y="0.4" width="16" height="11.8" rx="1.2" fill="#2f6f8a"/><rect x="0.9" y="1.1" width="14.6" height="10.4" rx="0.6" fill="url(#pc)"/><rect x="7" y="12.2" width="2.4" height="2.2" fill="#9a9a9a"/><rect x="4.4" y="14.2" width="7.6" height="1.1" fill="#8a8a8a"/></svg><svg class="abs" style="left:260px;top:540px;" width="17" height="17" viewBox="0 0 17 17"><rect x="2.4" y="4.4" width="14.2" height="10" rx="1" fill="#2f6f8a"/><rect x="3.1" y="5.1" width="12.8" height="8.6" rx="0.5" fill="url(#pc)"/><rect x="8.4" y="14.4" width="2.2" height="1.8" fill="#9a9a9a"/><rect x="5.8" y="16" width="7.4" height="1" fill="#8a8a8a"/><circle cx="4.6" cy="4.8" r="4.6" fill="#3f8fd2"/><path d="M2 2.4 Q4.4 0.8 6 2.6 Q4.4 4.6 5.4 6.4 Q3.6 8.6 1.4 6.4 Q0.6 4 2 2.4 Z" fill="#cfe8f8"/><path d="M7 4 Q8.6 5 8.4 7 Q7 6.4 7 4Z" fill="#cfe8f8"/></svg><div style="position:absolute;left:416.5px;top:147.5px;font-size:12px;line-height:16px;letter-spacing:-0.005px;color:#4b5f7a;font-weight:normal;white-space:pre;">Name</div><div style="position:absolute;left:664.5px;top:147.5px;font-size:12px;line-height:16px;letter-spacing:0.079px;color:#4b5f7a;font-weight:normal;white-space:pre;">Date modified</div><div style="position:absolute;left:808.5px;top:147.5px;font-size:12px;line-height:16px;letter-spacing:-0.660px;color:#4b5f7a;font-weight:normal;white-space:pre;transform:scaleX(0.9985);transform-origin:0 50%;">Type</div><div style="position:absolute;left:928.5px;top:147.5px;font-size:12px;line-height:16px;letter-spacing:-0.660px;color:#4b5f7a;font-weight:normal;white-space:pre;transform:scaleX(0.9362);transform-origin:0 50%;">Size</div><div class="abs" style="left:657px;top:143px;width:1px;height:25px;background:#e4e4e4;"></div><div class="abs" style="left:801px;top:143px;width:1px;height:25px;background:#e4e4e4;"></div><div class="abs" style="left:921px;top:143px;width:1px;height:25px;background:#e4e4e4;"></div><div class="abs" style="left:1001px;top:143px;width:1px;height:25px;background:#e4e4e4;"></div><svg class="abs" style="left:529px;top:143px;" width="10" height="6" viewBox="0 0 10 6"><path d="M1 5 L5 1 L9 5" fill="none" stroke="#555" stroke-width="1" stroke-linecap="round" stroke-linejoin="round"/></svg><svg class="abs" style="left:404px;top:180.2px;" width="16" height="12.7" viewBox="0 0 16 13"><path d="M0 1.2 Q0 0 1.2 0 L5.2 0 Q6 0 6.6 0.6 L8 2 L14.8 2 Q16 2 16 3.2 L16 6 L0 6 Z" fill="#f6dc95"/><path d="M0 3.6 L7 3.6 Q7.6 3.6 8.2 3 L8.6 2.6 Q9 2.2 9.6 2.2 L14.8 2.2 Q16 2.2 16 3.4 L16 11.8 Q16 13 14.8 13 L1.2 13 Q0 13 0 11.8 Z" fill="url(#fbh)"/><path d="M0.2 12.2 Q0.5 13 1.2 13 L14.8 13 Q15.5 13 15.8 12.2" fill="none" stroke="#f3d588" stroke-width="0.7"/></svg><div style="position:absolute;left:424.4px;top:179.5px;font-size:12px;line-height:16px;letter-spacing:-0.457px;color:#000;font-weight:normal;white-space:pre;">$Recycle.Bin</div><div style="position:absolute;left:664.5px;top:179.5px;font-size:12px;line-height:16px;letter-spacing:-0.369px;color:#5c5c5c;font-weight:normal;white-space:pre;">19/11/2566 10:58</div><div style="position:absolute;left:808.0px;top:179.5px;font-size:12px;line-height:16px;letter-spacing:-0.069px;color:#5c5c5c;font-weight:normal;white-space:pre;">File folder</div><svg class="abs" style="left:404px;top:211.2px;" width="16" height="12.7" viewBox="0 0 16 13"><path d="M0 1.2 Q0 0 1.2 0 L5.2 0 Q6 0 6.6 0.6 L8 2 L14.8 2 Q16 2 16 3.2 L16 6 L0 6 Z" fill="#f6dc95"/><path d="M0 3.6 L7 3.6 Q7.6 3.6 8.2 3 L8.6 2.6 Q9 2.2 9.6 2.2 L14.8 2.2 Q16 2.2 16 3.4 L16 11.8 Q16 13 14.8 13 L1.2 13 Q0 13 0 11.8 Z" fill="url(#fbh)"/><path d="M0.2 12.2 Q0.5 13 1.2 13 L14.8 13 Q15.5 13 15.8 12.2" fill="none" stroke="#f3d588" stroke-width="0.7"/></svg><div style="position:absolute;left:424.4px;top:210.5px;font-size:12px;line-height:16px;letter-spacing:-0.408px;color:#000;font-weight:normal;white-space:pre;">$WinREAgent</div><div style="position:absolute;left:664.5px;top:210.5px;font-size:12px;line-height:16px;letter-spacing:-0.309px;color:#5c5c5c;font-weight:normal;white-space:pre;">20/11/2566 11:07</div><div style="position:absolute;left:808.0px;top:210.5px;font-size:12px;line-height:16px;letter-spacing:-0.069px;color:#5c5c5c;font-weight:normal;white-space:pre;">File folder</div><svg class="abs" style="left:404px;top:242.2px;" width="16" height="12.7" viewBox="0 0 16 13"><path d="M0 1.2 Q0 0 1.2 0 L5.2 0 Q6 0 6.6 0.6 L8 2 L14.8 2 Q16 2 16 3.2 L16 6 L0 6 Z" fill="#f6dc95"/><path d="M0 3.6 L7 3.6 Q7.6 3.6 8.2 3 L8.6 2.6 Q9 2.2 9.6 2.2 L14.8 2.2 Q16 2.2 16 3.4 L16 11.8 Q16 13 14.8 13 L1.2 13 Q0 13 0 11.8 Z" fill="url(#fbh)"/><path d="M0.2 12.2 Q0.5 13 1.2 13 L14.8 13 Q15.5 13 15.8 12.2" fill="none" stroke="#f3d588" stroke-width="0.7"/></svg><svg class="abs" style="left:404px;top:248.9px;" width="8.2" height="8.2" viewBox="0 0 8.2 8.2"><rect x="0.4" y="0.4" width="7.4" height="7.4" fill="#fff" stroke="#c4d2e4" stroke-width="0.7"/><path d="M2.2 6 L5.8 2.4 M3 2.1 H6.1 V5.2" fill="none" stroke="#1a74dc" stroke-width="1.3"/></svg><div style="position:absolute;left:424.4px;top:241.5px;font-size:12px;line-height:16px;letter-spacing:-0.117px;color:#000;font-weight:normal;white-space:pre;">Documents and Settings</div><div style="position:absolute;left:664.5px;top:241.5px;font-size:12px;line-height:16px;letter-spacing:-0.391px;color:#5c5c5c;font-weight:normal;white-space:pre;">15/2/2566 5:44</div><div style="position:absolute;left:808.0px;top:241.5px;font-size:12px;line-height:16px;letter-spacing:-0.069px;color:#5c5c5c;font-weight:normal;white-space:pre;">File folder</div><svg class="abs" style="left:404px;top:273.2px;" width="16" height="12.7" viewBox="0 0 16 13"><path d="M0 1.2 Q0 0 1.2 0 L5.2 0 Q6 0 6.6 0.6 L8 2 L14.8 2 Q16 2 16 3.2 L16 6 L0 6 Z" fill="#f0ac1c"/><path d="M0 3.6 L7 3.6 Q7.6 3.6 8.2 3 L8.6 2.6 Q9 2.2 9.6 2.2 L14.8 2.2 Q16 2.2 16 3.4 L16 11.8 Q16 13 14.8 13 L1.2 13 Q0 13 0 11.8 Z" fill="url(#fb)"/><path d="M0.2 12.2 Q0.5 13 1.2 13 L14.8 13 Q15.5 13 15.8 12.2" fill="none" stroke="#e9aa28" stroke-width="0.7"/></svg><div style="position:absolute;left:424.4px;top:272.5px;font-size:12px;line-height:16px;letter-spacing:-0.390px;color:#000;font-weight:normal;white-space:pre;">PerfLogs</div><div style="position:absolute;left:664.5px;top:272.5px;font-size:12px;line-height:16px;letter-spacing:-0.391px;color:#5c5c5c;font-weight:normal;white-space:pre;">7/5/2565 12:24</div><div style="position:absolute;left:808.0px;top:272.5px;font-size:12px;line-height:16px;letter-spacing:-0.069px;color:#5c5c5c;font-weight:normal;white-space:pre;">File folder</div><svg class="abs" style="left:404px;top:304.2px;" width="16" height="12.7" viewBox="0 0 16 13"><path d="M0 1.2 Q0 0 1.2 0 L5.2 0 Q6 0 6.6 0.6 L8 2 L14.8 2 Q16 2 16 3.2 L16 6 L0 6 Z" fill="#f0ac1c"/><path d="M0 3.6 L7 3.6 Q7.6 3.6 8.2 3 L8.6 2.6 Q9 2.2 9.6 2.2 L14.8 2.2 Q16 2.2 16 3.4 L16 11.8 Q16 13 14.8 13 L1.2 13 Q0 13 0 11.8 Z" fill="url(#fb)"/><path d="M0.2 12.2 Q0.5 13 1.2 13 L14.8 13 Q15.5 13 15.8 12.2" fill="none" stroke="#e9aa28" stroke-width="0.7"/></svg><div style="position:absolute;left:424.4px;top:303.5px;font-size:12px;line-height:16px;letter-spacing:-0.282px;color:#000;font-weight:normal;white-space:pre;">Program Files</div><div style="position:absolute;left:664.5px;top:303.5px;font-size:12px;line-height:16px;letter-spacing:-0.309px;color:#5c5c5c;font-weight:normal;white-space:pre;">20/11/2566 11:00</div><div style="position:absolute;left:808.0px;top:303.5px;font-size:12px;line-height:16px;letter-spacing:-0.069px;color:#5c5c5c;font-weight:normal;white-space:pre;">File folder</div><svg class="abs" style="left:404px;top:335.2px;" width="16" height="12.7" viewBox="0 0 16 13"><path d="M0 1.2 Q0 0 1.2 0 L5.2 0 Q6 0 6.6 0.6 L8 2 L14.8 2 Q16 2 16 3.2 L16 6 L0 6 Z" fill="#f0ac1c"/><path d="M0 3.6 L7 3.6 Q7.6 3.6 8.2 3 L8.6 2.6 Q9 2.2 9.6 2.2 L14.8 2.2 Q16 2.2 16 3.4 L16 11.8 Q16 13 14.8 13 L1.2 13 Q0 13 0 11.8 Z" fill="url(#fb)"/><path d="M0.2 12.2 Q0.5 13 1.2 13 L14.8 13 Q15.5 13 15.8 12.2" fill="none" stroke="#e9aa28" stroke-width="0.7"/></svg><div style="position:absolute;left:424.4px;top:334.5px;font-size:12px;line-height:16px;letter-spacing:-0.298px;color:#000;font-weight:normal;white-space:pre;">Program Files (x86)</div><div style="position:absolute;left:664.5px;top:334.5px;font-size:12px;line-height:16px;letter-spacing:-0.391px;color:#5c5c5c;font-weight:normal;white-space:pre;">14/9/2565 9:38</div><div style="position:absolute;left:808.0px;top:334.5px;font-size:12px;line-height:16px;letter-spacing:-0.069px;color:#5c5c5c;font-weight:normal;white-space:pre;">File folder</div><svg class="abs" style="left:404px;top:366.2px;" width="16" height="12.7" viewBox="0 0 16 13"><path d="M0 1.2 Q0 0 1.2 0 L5.2 0 Q6 0 6.6 0.6 L8 2 L14.8 2 Q16 2 16 3.2 L16 6 L0 6 Z" fill="#f6dc95"/><path d="M0 3.6 L7 3.6 Q7.6 3.6 8.2 3 L8.6 2.6 Q9 2.2 9.6 2.2 L14.8 2.2 Q16 2.2 16 3.4 L16 11.8 Q16 13 14.8 13 L1.2 13 Q0 13 0 11.8 Z" fill="url(#fbh)"/><path d="M0.2 12.2 Q0.5 13 1.2 13 L14.8 13 Q15.5 13 15.8 12.2" fill="none" stroke="#f3d588" stroke-width="0.7"/></svg><div style="position:absolute;left:424.4px;top:365.5px;font-size:12px;line-height:16px;letter-spacing:-0.237px;color:#000;font-weight:normal;white-space:pre;">ProgramData</div><div style="position:absolute;left:664.5px;top:365.5px;font-size:12px;line-height:16px;letter-spacing:-0.369px;color:#5c5c5c;font-weight:normal;white-space:pre;">20/11/2566 10:29</div><div style="position:absolute;left:808.0px;top:365.5px;font-size:12px;line-height:16px;letter-spacing:-0.069px;color:#5c5c5c;font-weight:normal;white-space:pre;">File folder</div><svg class="abs" style="left:404px;top:397.2px;" width="16" height="12.7" viewBox="0 0 16 13"><path d="M0 1.2 Q0 0 1.2 0 L5.2 0 Q6 0 6.6 0.6 L8 2 L14.8 2 Q16 2 16 3.2 L16 6 L0 6 Z" fill="#f6dc95"/><path d="M0 3.6 L7 3.6 Q7.6 3.6 8.2 3 L8.6 2.6 Q9 2.2 9.6 2.2 L14.8 2.2 Q16 2.2 16 3.4 L16 11.8 Q16 13 14.8 13 L1.2 13 Q0 13 0 11.8 Z" fill="url(#fbh)"/><path d="M0.2 12.2 Q0.5 13 1.2 13 L14.8 13 Q15.5 13 15.8 12.2" fill="none" stroke="#f3d588" stroke-width="0.7"/></svg><div style="position:absolute;left:424.4px;top:396.5px;font-size:12px;line-height:16px;letter-spacing:-0.455px;color:#000;font-weight:normal;white-space:pre;">Recovery</div><div style="position:absolute;left:664.5px;top:396.5px;font-size:12px;line-height:16px;letter-spacing:-0.391px;color:#5c5c5c;font-weight:normal;white-space:pre;">15/2/2566 5:43</div><div style="position:absolute;left:808.0px;top:396.5px;font-size:12px;line-height:16px;letter-spacing:-0.069px;color:#5c5c5c;font-weight:normal;white-space:pre;">File folder</div><svg class="abs" style="left:404px;top:428.2px;" width="16" height="12.7" viewBox="0 0 16 13"><path d="M0 1.2 Q0 0 1.2 0 L5.2 0 Q6 0 6.6 0.6 L8 2 L14.8 2 Q16 2 16 3.2 L16 6 L0 6 Z" fill="#f6dc95"/><path d="M0 3.6 L7 3.6 Q7.6 3.6 8.2 3 L8.6 2.6 Q9 2.2 9.6 2.2 L14.8 2.2 Q16 2.2 16 3.4 L16 11.8 Q16 13 14.8 13 L1.2 13 Q0 13 0 11.8 Z" fill="url(#fbh)"/><path d="M0.2 12.2 Q0.5 13 1.2 13 L14.8 13 Q15.5 13 15.8 12.2" fill="none" stroke="#f3d588" stroke-width="0.7"/></svg><div style="position:absolute;left:424.4px;top:427.5px;font-size:12px;line-height:16px;letter-spacing:-0.031px;color:#000;font-weight:normal;white-space:pre;">System Volume Information</div><div style="position:absolute;left:664.5px;top:427.5px;font-size:12px;line-height:16px;letter-spacing:-0.391px;color:#5c5c5c;font-weight:normal;white-space:pre;">15/2/2566 5:44</div><div style="position:absolute;left:808.0px;top:427.5px;font-size:12px;line-height:16px;letter-spacing:-0.069px;color:#5c5c5c;font-weight:normal;white-space:pre;">File folder</div><svg class="abs" style="left:404px;top:459.2px;" width="16" height="12.7" viewBox="0 0 16 13"><path d="M0 1.2 Q0 0 1.2 0 L5.2 0 Q6 0 6.6 0.6 L8 2 L14.8 2 Q16 2 16 3.2 L16 6 L0 6 Z" fill="#f0ac1c"/><path d="M0 3.6 L7 3.6 Q7.6 3.6 8.2 3 L8.6 2.6 Q9 2.2 9.6 2.2 L14.8 2.2 Q16 2.2 16 3.4 L16 11.8 Q16 13 14.8 13 L1.2 13 Q0 13 0 11.8 Z" fill="url(#fb)"/><path d="M0.2 12.2 Q0.5 13 1.2 13 L14.8 13 Q15.5 13 15.8 12.2" fill="none" stroke="#e9aa28" stroke-width="0.7"/></svg><div style="position:absolute;left:424.4px;top:458.5px;font-size:12px;line-height:16px;letter-spacing:-0.660px;color:#000;font-weight:normal;white-space:pre;transform:scaleX(0.9546);transform-origin:0 50%;">Users</div><svg class="abs" style="left:404px;top:490.2px;" width="16" height="12.7" viewBox="0 0 16 13"><path d="M0 1.2 Q0 0 1.2 0 L5.2 0 Q6 0 6.6 0.6 L8 2 L14.8 2 Q16 2 16 3.2 L16 6 L0 6 Z" fill="#f0ac1c"/><path d="M0 3.6 L7 3.6 Q7.6 3.6 8.2 3 L8.6 2.6 Q9 2.2 9.6 2.2 L14.8 2.2 Q16 2.2 16 3.4 L16 11.8 Q16 13 14.8 13 L1.2 13 Q0 13 0 11.8 Z" fill="url(#fb)"/><path d="M0.2 12.2 Q0.5 13 1.2 13 L14.8 13 Q15.5 13 15.8 12.2" fill="none" stroke="#e9aa28" stroke-width="0.7"/></svg><div style="position:absolute;left:424.4px;top:489.5px;font-size:12px;line-height:16px;letter-spacing:-0.031px;color:#000;font-weight:normal;white-space:pre;">Windows</div><svg class="abs" style="left:405.5px;top:519.7px;" width="13" height="16" viewBox="0 0 13 16"><path d="M0.5 1.5 Q0.5 0.5 1.5 0.5 L8.5 0.5 L12.5 4.5 L12.5 14.5 Q12.5 15.5 11.5 15.5 L1.5 15.5 Q0.5 15.5 0.5 14.5 Z" fill="#fff" stroke="#a2a2a2" stroke-width="0.9"/><path d="M8.5 0.5 L8.5 4.5 L12.5 4.5" fill="none" stroke="#a2a2a2" stroke-width="0.9"/></svg><div style="position:absolute;left:424.4px;top:520.5px;font-size:12px;line-height:16px;letter-spacing:0.018px;color:#000;font-weight:normal;white-space:pre;">DumpStack.log.tmp</div><div style="position:absolute;left:964.1px;top:521.3px;font-size:12px;line-height:16px;letter-spacing:-0.660px;color:#5c5c5c;font-weight:normal;white-space:pre;transform:scaleX(0.9823);transform-origin:0 50%;">12 KB</div><svg class="abs" style="left:405.5px;top:550.7px;" width="13" height="16" viewBox="0 0 13 16"><path d="M0.5 1.5 Q0.5 0.5 1.5 0.5 L8.5 0.5 L12.5 4.5 L12.5 14.5 Q12.5 15.5 11.5 15.5 L1.5 15.5 Q0.5 15.5 0.5 14.5 Z" fill="#fff" stroke="#a2a2a2" stroke-width="0.9"/><path d="M8.5 0.5 L8.5 4.5 L12.5 4.5" fill="none" stroke="#a2a2a2" stroke-width="0.9"/><circle cx="5" cy="7" r="1.9" fill="none" stroke="#9aa3ad" stroke-width="1.1"/><circle cx="7.3" cy="10" r="1.5" fill="none" stroke="#a8b0ba" stroke-width="1"/></svg><div style="position:absolute;left:424.4px;top:551.5px;font-size:12px;line-height:16px;letter-spacing:-0.261px;color:#000;font-weight:normal;white-space:pre;">pagefile.sys</div><div style="position:absolute;left:927.9px;top:552.3px;font-size:12px;line-height:16px;letter-spacing:-0.641px;color:#5c5c5c;font-weight:normal;white-space:pre;">1,966,792 KB</div><svg class="abs" style="left:405.5px;top:581.7px;" width="13" height="16" viewBox="0 0 13 16"><path d="M0.5 1.5 Q0.5 0.5 1.5 0.5 L8.5 0.5 L12.5 4.5 L12.5 14.5 Q12.5 15.5 11.5 15.5 L1.5 15.5 Q0.5 15.5 0.5 14.5 Z" fill="#fff" stroke="#a2a2a2" stroke-width="0.9"/><path d="M8.5 0.5 L8.5 4.5 L12.5 4.5" fill="none" stroke="#a2a2a2" stroke-width="0.9"/><circle cx="5" cy="7" r="1.9" fill="none" stroke="#9aa3ad" stroke-width="1.1"/><circle cx="7.3" cy="10" r="1.5" fill="none" stroke="#a8b0ba" stroke-width="1"/></svg><div style="position:absolute;left:424.4px;top:582.5px;font-size:12px;line-height:16px;letter-spacing:-0.290px;color:#000;font-weight:normal;white-space:pre;">swapfile.sys</div><div style="position:absolute;left:943.0px;top:583.3px;font-size:12px;line-height:16px;letter-spacing:-0.660px;color:#5c5c5c;font-weight:normal;white-space:pre;transform:scaleX(0.9969);transform-origin:0 50%;">16,384 KB</div><div class="abs" style="left:385px;top:680px;width:623px;height:16px;background:#f0f0f0;"></div><div class="abs" style="left:403px;top:687px;width:584px;height:2px;background:#808080;border-radius:1px;"></div><div style="position:absolute;left:240.3px;top:699.5px;font-size:12px;line-height:16px;letter-spacing:-0.280px;color:#1b2a4a;font-weight:normal;white-space:pre;">14 items</div><div class="abs" style="left:295px;top:700px;width:1px;height:15px;background:#e6e6e6;"></div><div class="abs" style="left:960px;top:696px;width:22px;height:23px;background:#cde6f7;border:1px solid #2c98e0;"></div><svg class="abs" style="left:965px;top:702px;" width="14" height="12" viewBox="0 0 14 12"><path d="M1 1.2 H13 M1 4.4 H13 M1 7.6 H13 M1 10.8 H13" stroke="#111" stroke-width="1.1"/></svg><svg class="abs" style="left:986px;top:700px;" width="14" height="14" viewBox="0 0 14 14"><rect x="1.2" y="1.2" width="11.4" height="8.8" fill="none" stroke="#111" stroke-width="1.2"/><path d="M1 12.4 H13" stroke="#111" stroke-width="1.1"/></svg><div class="abs" style="left:0;top:720px;width:1024px;height:48px;background:#efefef;"></div><svg class="abs" style="left:20px;top:728px;" width="26" height="24" viewBox="0 0 26 24"><defs><linearGradient id="wg" x1="0.2" y1="0" x2="0.7" y2="1"><stop offset="0" stop-color="#b4bcc4"/><stop offset="1" stop-color="#7c838a"/></linearGradient><linearGradient id="wc" x1="0" y1="0" x2="1" y2="1"><stop offset="0" stop-color="#ffffff"/><stop offset="1" stop-color="#ccd3dc"/></linearGradient></defs><circle cx="11" cy="10.8" r="10.4" fill="url(#wg)"/><path transform="translate(3.3,0.4)" d="M9.6 17.6 Q6.6 17.6 6.6 14.8 Q6.6 12.4 9.2 12.2 Q10.2 9.4 13.2 9.4 Q16 9.4 16.8 12 Q19.4 12.2 19.4 14.8 Q19.4 17.6 16.6 17.6 Z" fill="url(#wc)"/></svg><svg class="abs" style="left:279px;top:733px;" width="24" height="23" viewBox="0 0 24 23"><defs><linearGradient id="st" gradientUnits="userSpaceOnUse" x1="0" y1="0" x2="23" y2="23"><stop offset="0" stop-color="#4fc9f8"/><stop offset="0.5" stop-color="#1f9be8"/><stop offset="1" stop-color="#0a6acc"/></linearGradient></defs><rect x="0" y="0" width="10.9" height="10.8" rx="0.8" fill="url(#st)"/><rect x="12.1" y="0" width="10.9" height="10.8" rx="0.8" fill="url(#st)"/><rect x="0" y="12" width="10.9" height="10.8" rx="0.8" fill="url(#st)"/><rect x="12.1" y="12" width="10.9" height="10.8" rx="0.8" fill="url(#st)"/></svg><div class="abs" style="left:316px;top:728.2px;width:219px;height:31.4px;background:#fafafa;border:1px solid #d2d2d2;border-radius:16px;"></div><svg class="abs" style="left:326px;top:736px;" width="16" height="16" viewBox="0 0 16 16"><circle cx="6.6" cy="6.6" r="5.2" fill="none" stroke="#1a1a1a" stroke-width="1.6"/><path d="M10.4 10.4 L14.8 14.8" stroke="#1a1a1a" stroke-width="1.8" stroke-linecap="round"/></svg><div style="position:absolute;left:352.0px;top:735.7px;font-size:14px;line-height:18px;letter-spacing:-0.752px;color:#5a5a5a;font-weight:normal;white-space:pre;">Search</div><svg class="abs" style="left:546px;top:732px;" width="26" height="24" viewBox="0 0 26 24"><defs><linearGradient id="tv" x1="0" y1="0" x2="0.3" y2="1"><stop offset="0" stop-color="#ffffff"/><stop offset="1" stop-color="#dcdcdc"/></linearGradient><linearGradient id="tvb" x1="0" y1="0" x2="0.6" y2="1"><stop offset="0" stop-color="#404040"/><stop offset="1" stop-color="#0e0e0e"/></linearGradient><linearGradient id="tvo" x1="0" y1="0" x2="0" y2="1"><stop offset="0" stop-color="#cdcdcd"/><stop offset="1" stop-color="#a4a4a4"/></linearGradient></defs><rect x="6.9" y="1" width="17.6" height="15.6" rx="0.8" fill="url(#tv)"/><rect x="1" y="6.8" width="18" height="16.2" rx="1" fill="url(#tvb)"/><path d="M6.9 6.8 H18 Q19 6.8 19 7.8 V16.6 H6.9 Z" fill="url(#tvo)"/></svg><svg class="abs" style="left:590px;top:732px;" width="25" height="24" viewBox="0 0 25 24"><defs><linearGradient id="ch" x1="1" y1="0" x2="0.1" y2="1"><stop offset="0" stop-color="#7f92ec"/><stop offset="0.55" stop-color="#5f62d8"/><stop offset="1" stop-color="#474bcc"/></linearGradient><radialGradient id="ch2" cx="0.15" cy="0.15" r="0.6"><stop offset="0" stop-color="#9358c0" stop-opacity="0.85"/><stop offset="1" stop-color="#9358c0" stop-opacity="0"/></radialGradient></defs><path id="chp" d="M12.4 0.4 A11.3 11.3 0 0 1 12.4 23 Q9.4 23 7 21.6 L1.2 23 L3 18.4 A11.3 11.3 0 0 1 12.4 0.4 Z" fill="url(#ch)"/><path d="M12.4 0.4 A11.3 11.3 0 0 1 12.4 23 Q9.4 23 7 21.6 L1.2 23 L3 18.4 A11.3 11.3 0 0 1 12.4 0.4 Z" fill="url(#ch2)"/><rect x="5.9" y="7.2" width="9.3" height="9.6" rx="1.6" fill="#fff"/><path d="M16.4 10.2 Q16.4 9.6 16.9 9.2 L18.6 8 Q19.1 7.7 19.1 8.4 V15.6 Q19.1 16.3 18.6 16 L16.9 14.8 Q16.4 14.4 16.4 13.8 Z" fill="#fff"/></svg><div class="abs" style="left:627px;top:724px;width:40px;height:40px;background:#f8f8f8;border:1px solid #eaeaea;border-radius:6px;"></div><svg class="abs" style="left:635px;top:733px;" width="24" height="23" viewBox="0 0 24 23"><defs><linearGradient id="ex" x1="0" y1="0" x2="0" y2="1"><stop offset="0" stop-color="#ffd75a"/><stop offset="1" stop-color="#f5b62c"/></linearGradient><linearGradient id="ex2" x1="0" y1="0" x2="0" y2="1"><stop offset="0" stop-color="#2a9bea"/><stop offset="1" stop-color="#0b67c4"/></linearGradient></defs><path d="M0 2 Q0 0.4 1.6 0.4 H8 Q9 0.4 9.6 1.2 L10.8 3 H22.4 Q24 3 24 4.6 V8 H0 Z" fill="#e8a318"/><rect x="0" y="3.4" width="24" height="17.4" rx="1.6" fill="url(#ex)"/><path d="M4.4 22 V17 Q4.4 15.4 6 15.4 H18 Q19.6 15.4 19.6 17 V22 Z" fill="url(#ex2)"/><rect x="8" y="18" width="8" height="1.6" rx="0.8" fill="#0a4f9c"/></svg><div class="abs" style="left:639px;top:760px;width:16px;height:3px;background:#0a66c2;border-radius:1.5px;"></div><svg class="abs" style="left:678.8px;top:731.6px;" width="24.4" height="24.4" viewBox="0 0 48 48"><defs>
<linearGradient id="e1" x1="0" y1="0" x2="1" y2="0.8"><stop offset="0" stop-color="#1254a8"/><stop offset="1" stop-color="#0c3f88"/></linearGradient>
<linearGradient id="e2" x1="0.3" y1="0" x2="0.5" y2="1"><stop offset="0" stop-color="#1da0ea"/><stop offset="0.5" stop-color="#1183dc"/><stop offset="1" stop-color="#0a66c8"/></linearGradient>
<linearGradient id="e3" x1="0" y1="0.4" x2="1" y2="0.55"><stop offset="0" stop-color="#27aeea"/><stop offset="0.45" stop-color="#2cc4cf"/><stop offset="0.75" stop-color="#45d389"/><stop offset="1" stop-color="#66e44a"/></linearGradient>
</defs>
<path d="M17 22.6 C15 25.5 13.6 30 14.2 34.5 C15.5 42.5 21 47.5 24 47.9 C32 48.5 40 44.5 44.2 36.5 C44.6 35.6 43.9 35.2 43.2 35.7 C40 37.6 35 38.2 30.5 36.8 C24 34.8 19.4 30 18.4 25.6 C18.1 24.4 17.6 23.4 17 22.6 Z" fill="url(#e1)"/>
<path d="M0.6 21 C3 16 10 12.6 18.5 13 C23.5 13.4 27.5 16.5 28.6 20.5 C27 19.4 24.6 18.8 22.5 19.3 C18.5 20 15.2 23 14.4 27 C13 34 16 42 24 47.9 C10 48 -1 36 0.6 21 Z" fill="url(#e2)"/>
<path d="M0.6 21 C1 9 11 0 24 0 C38 0 48 9 48 20 C48 28 42 32.5 36 32.5 C31 32.5 27.5 30.5 26.3 29 C28.5 27.5 29.5 25 29 22.5 C28.3 17 23.5 13.4 18.5 13 C10 12.6 3 16 0.6 21 Z" fill="url(#e3)"/></svg><svg class="abs" style="left:723px;top:732px;" width="24" height="25" viewBox="0 0 24 25"><defs><linearGradient id="sg" x1="0" y1="0" x2="0" y2="1"><stop offset="0" stop-color="#1a5eac"/><stop offset="1" stop-color="#0e3a78"/></linearGradient></defs><path d="M6 6.4 V3.6 Q6 1.7 7.9 1.7 H16.1 Q18 1.7 18 3.6 V6.4" fill="none" stroke="#2ab2f0" stroke-width="1.5"/><path d="M0.3 5.2 H23.5 V20.6 Q23.5 24 20.1 24 H3.7 Q0.3 24 0.3 20.6 Z" fill="url(#sg)"/><rect x="7.2" y="9.6" width="4.2" height="4.2" fill="#f25022"/><rect x="12.4" y="9.6" width="4.2" height="4.2" fill="#7fba00"/><rect x="7.2" y="14.8" width="4.2" height="4.2" fill="#00a4ef"/><rect x="12.4" y="14.8" width="4.2" height="4.2" fill="#ffb900"/></svg><svg class="abs" style="left:788px;top:739px;" width="12" height="9" viewBox="0 0 12 9"><path d="M1 7.4 L6 2 L11 7.4" fill="none" stroke="#1a1a1a" stroke-width="1.4" stroke-linecap="round" stroke-linejoin="round"/></svg><div style="position:absolute;left:820.4px;top:737.0px;font-size:12px;line-height:16px;letter-spacing:-0.660px;color:#1a1a1a;font-weight:normal;white-space:pre;transform:scaleX(0.9475);transform-origin:0 50%;">ENG</div><svg class="abs" style="left:861px;top:735px;" width="18" height="18" viewBox="0 0 18 18"><circle cx="8.4" cy="8.6" r="7.4" fill="none" stroke="#222" stroke-width="1.1"/><ellipse cx="8.4" cy="8.6" rx="3.2" ry="7.4" fill="none" stroke="#222" stroke-width="1"/><path d="M1.2 6.4 H15.6 M1.2 10.8 H8" stroke="#222" stroke-width="1" fill="none"/><circle cx="12.4" cy="12.6" r="4.2" fill="#eee" stroke="#222" stroke-width="1.1"/><path d="M9.6 15.4 L15.2 9.8" stroke="#222" stroke-width="1.1"/></svg><svg class="abs" style="left:886px;top:736px;" width="17" height="16" viewBox="0 0 17 16"><path d="M1 5.6 H3.6 L7.4 2 V14 L3.6 10.4 H1 Z" fill="none" stroke="#222" stroke-width="1.1" stroke-linejoin="round"/><path d="M9.8 5.4 Q11.2 8 9.8 10.6 M12 3.6 Q14.4 8 12 12.4 M14.2 2 Q17.4 8 14.2 14" fill="none" stroke="#222" stroke-width="1.05" stroke-linecap="round"/></svg><div style="position:absolute;left:952.5px;top:728.5px;font-size:12px;line-height:16px;letter-spacing:-0.383px;color:#1a1a1a;font-weight:normal;white-space:pre;">17:58</div><div style="position:absolute;left:920.0px;top:744.3px;font-size:12px;line-height:16px;letter-spacing:0.203px;color:#1a1a1a;font-weight:normal;white-space:pre;">22/11/2566</div><svg class="abs" style="left:989px;top:736.5px;" width="15" height="17" viewBox="0 0 15 17"><path d="M7.2 0.4 Q12 0.4 12 5.6 V8.4 Q12 9.6 12.8 10.6 L13.6 11.6 Q14 12.6 13 12.6 H1.4 Q0.4 12.6 0.8 11.6 L1.6 10.6 Q2.4 9.6 2.4 8.4 V5.6 Q2.4 0.4 7.2 0.4 Z" fill="#0044a6"/><path d="M5 13.6 Q7.2 16.4 9.4 13.6 Z" fill="#0044a6"/></svg><div class="abs" style="left:598px;top:435px;width:266px;height:259px;background:#f9f9f9;border:1px solid #dedede;border-radius:8px;box-shadow:0 8px 16px rgba(0,0,0,0.16),0 0 3px rgba(0,0,0,0.10);"></div><div class="abs" style="left:603px;top:546px;width:256px;height:28px;background:#f0f0f0;border-radius:4px;"></div><div class="abs" style="left:601px;top:539px;width:260px;height:1px;background:#e4e4e4;"></div><div class="abs" style="left:601px;top:612px;width:260px;height:1px;background:#e4e4e4;"></div><div class="abs" style="left:601px;top:653px;width:260px;height:1px;background:#e4e4e4;"></div><div style="position:absolute;left:640.0px;top:446.3px;font-size:14px;line-height:18px;letter-spacing:-0.265px;color:#1a1a1a;font-weight:normal;white-space:pre;">View</div><div style="position:absolute;left:640.0px;top:478.3px;font-size:14px;line-height:18px;letter-spacing:-0.060px;color:#1a1a1a;font-weight:normal;white-space:pre;">Sort by</div><div style="position:absolute;left:640.0px;top:510.3px;font-size:14px;line-height:18px;letter-spacing:-0.013px;color:#1a1a1a;font-weight:normal;white-space:pre;">Group by</div><div style="position:absolute;left:640.0px;top:550.8px;font-size:14px;line-height:18px;letter-spacing:-0.258px;color:#1a1a1a;font-weight:normal;white-space:pre;">New</div><div style="position:absolute;left:640.0px;top:583.3px;font-size:14px;line-height:18px;letter-spacing:-0.146px;color:#1a1a1a;font-weight:normal;white-space:pre;">Properties</div><div style="position:absolute;left:640.0px;top:624.4px;font-size:14px;line-height:18px;letter-spacing:-0.039px;color:#1a1a1a;font-weight:normal;white-space:pre;">Open in Terminal</div><div style="position:absolute;left:640.0px;top:665.3px;font-size:14px;line-height:18px;letter-spacing:0.041px;color:#1a1a1a;font-weight:normal;white-space:pre;">Show more options</div><div style="position:absolute;left:797.0px;top:584.8px;font-size:12px;line-height:16px;letter-spacing:0.037px;color:#5f5f5f;font-weight:normal;white-space:pre;">Alt+Enter</div><svg class="abs" style="left:838px;top:450px;" width="8" height="10" viewBox="0 0 8 10"><path d="M2.0 1 L6.0 5 L2.0 9" fill="none" stroke="#555" stroke-width="1.1" stroke-linecap="round" stroke-linejoin="round"/></svg><svg class="abs" style="left:838px;top:482px;" width="8" height="10" viewBox="0 0 8 10"><path d="M2.0 1 L6.0 5 L2.0 9" fill="none" stroke="#555" stroke-width="1.1" stroke-linecap="round" stroke-linejoin="round"/></svg><svg class="abs" style="left:838px;top:514px;" width="8" height="10" viewBox="0 0 8 10"><path d="M2.0 1 L6.0 5 L2.0 9" fill="none" stroke="#555" stroke-width="1.1" stroke-linecap="round" stroke-linejoin="round"/></svg><svg class="abs" style="left:838px;top:554.5px;" width="8" height="10" viewBox="0 0 8 10"><path d="M2.0 1 L6.0 5 L2.0 9" fill="none" stroke="#555" stroke-width="1.1" stroke-linecap="round" stroke-linejoin="round"/></svg><svg class="abs" style="left:613.5px;top:448px;" width="15" height="15" viewBox="0 0 15 15"><rect x="0.9" y="0.9" width="5.2" height="5.2" rx="1.7" fill="none" stroke="#3a3a3a" stroke-width="1"/><rect x="0.9" y="8.9" width="5.2" height="5.2" rx="1.7" fill="none" stroke="#3a3a3a" stroke-width="1"/><rect x="8.9" y="0.9" width="5.2" height="5.2" rx="1.7" fill="none" stroke="#3a3a3a" stroke-width="1"/><rect x="8.9" y="8.9" width="5.2" height="5.2" rx="1.7" fill="none" stroke="#3a3a3a" stroke-width="1"/></svg><svg class="abs" style="left:612.5px;top:481px;" width="18" height="13" viewBox="0 0 18 13"><path d="M4.6 11.8 V1.2 M0.9 4.6 L4.6 0.9 L8.3 4.6" fill="none" stroke="#3a3a3a" stroke-width="1.05" stroke-linecap="round" stroke-linejoin="round"/><path d="M12.4 0.8 V11.6 M8.7 8.2 L12.4 11.9 L16.1 8.2" fill="none" stroke="#0a74d6" stroke-width="1.05" stroke-linecap="round" stroke-linejoin="round"/></svg><svg class="abs" style="left:613.5px;top:512px;" width="15" height="15" viewBox="0 0 15 15"><path d="M4.8 1.4 H14.2 M4.8 5.1 H14.2 M4.8 9.5 H14.2 M4.8 13 H14.2" stroke="#3a3a3a" stroke-width="1.05" stroke-linecap="round"/><path d="M2.8 0.6 H2 Q0.6 0.6 0.6 2 V4.4 Q0.6 5.8 2 5.8 H2.8 M2.8 8.8 H2 Q0.6 8.8 0.6 10.2 V12.4 Q0.6 13.8 2 13.8 H2.8" fill="none" stroke="#0a74d6" stroke-width="1.1" stroke-linecap="round"/></svg><svg class="abs" style="left:612px;top:551.2px;" width="17" height="17" viewBox="0 0 17 17"><circle cx="8.4" cy="8.3" r="7.1" fill="none" stroke="#3a3a3a" stroke-width="1"/><path d="M8.5 4.8 V11.8 M5 8.3 H12" stroke="#0a74d6" stroke-width="1.1" stroke-linecap="round"/></svg><svg class="abs" style="left:612.6px;top:584px;" width="16.6" height="16.6" viewBox="0 0 18 18"><path d="M11.9 1.1 A4.6 4.6 0 0 0 7.7 7.4 L1.5 13.8 A1.9 1.9 0 0 0 4.2 16.5 L10.5 10.2 A4.6 4.6 0 0 0 16.8 6 L14 8.4 L11.4 7.8 L10.2 5.2 L12.7 2.3 Z" fill="none" stroke="#3a3a3a" stroke-width="1.05" stroke-linejoin="round"/></svg><svg class="abs" style="left:613px;top:627.2px;" width="16" height="12" viewBox="0 0 16 12"><rect x="0" y="0" width="16" height="12" rx="0.8" fill="#2b2b2b"/><rect x="0" y="0" width="16" height="2.2" fill="#4a4a4a"/><path d="M2.4 4.6 L5.4 7 L2.4 9.4" fill="none" stroke="#fff" stroke-width="1.2"/><path d="M6.8 9.6 H11.2" stroke="#fff" stroke-width="1.2"/></svg><svg class="abs" style="left:613.6px;top:666.6px;" width="15" height="15" viewBox="0 0 16 16"><path d="M7 2 H4 Q1 2 1 5 V12 Q1 15 4 15 H11 Q14 15 14 12 V9" fill="none" stroke="#3a3a3a" stroke-width="1.05"/><path d="M1 8.6 H5 Q7.4 8.6 7.4 11 V15" fill="none" stroke="#3a3a3a" stroke-width="1.05"/><path d="M9 7 L15 1 M10.4 0.8 H15.2 V5.6" fill="none" stroke="#0a74d6" stroke-width="1.1" stroke-linecap="round" stroke-linejoin="round"/></svg><div class="abs" style="left:856.5px;top:544.5px;width:98px;height:36.5px;background:#f9f9f9;border:1px solid #dedede;border-radius:8px;box-shadow:0 5px 12px rgba(0,0,0,0.15),0 0 3px rgba(0,0,0,0.08);"></div><svg class="abs" style="left:872px;top:556px;" width="16" height="13" viewBox="0 0 16 13"><path d="M0 1.2 Q0 0 1.2 0 L5.2 0 Q6 0 6.6 0.6 L8 2 L14.8 2 Q16 2 16 3.2 L16 6 L0 6 Z" fill="#f0ac1c"/><path d="M0 3.6 L7 3.6 Q7.6 3.6 8.2 3 L8.6 2.6 Q9 2.2 9.6 2.2 L14.8 2.2 Q16 2.2 16 3.4 L16 11.8 Q16 13 14.8 13 L1.2 13 Q0 13 0 11.8 Z" fill="url(#fb)"/><path d="M0.2 12.2 Q0.5 13 1.2 13 L14.8 13 Q15.5 13 15.8 12.2" fill="none" stroke="#e9aa28" stroke-width="0.7"/></svg><div style="position:absolute;left:900.0px;top:554.0px;font-size:14px;line-height:18px;letter-spacing:-0.178px;color:#1a1a1a;font-weight:normal;white-space:pre;">Folder</div><svg class="abs" style="left:525.10px;top:624.90px" width="28" height="28" viewBox="0 0 28 28"><circle cx="14" cy="14" r="11.15" fill="#fff" stroke="#cc0000" stroke-width="1.8"/></svg><div class="abs" style="left:527.10px;top:627.30px;width:24px;height:24px;line-height:24px;text-align:center;font-size:19.5px;color:#000;-webkit-text-stroke:0.25px #000;">1</div><svg class="abs" style="left:682.30px;top:543.20px" width="28" height="28" viewBox="0 0 28 28"><circle cx="14" cy="14" r="11.15" fill="#fff" stroke="#cc0000" stroke-width="1.8"/></svg><div class="abs" style="left:684.30px;top:545.60px;width:24px;height:24px;line-height:24px;text-align:center;font-size:19.5px;color:#000;-webkit-text-stroke:0.25px #000;">2</div><svg class="abs" style="left:865.90px;top:521.70px" width="28" height="28" viewBox="0 0 28 28"><circle cx="14" cy="14" r="11.15" fill="#fff" stroke="#cc0000" stroke-width="1.8"/></svg><div class="abs" style="left:867.90px;top:524.10px;width:24px;height:24px;line-height:24px;text-align:center;font-size:19.5px;color:#000;-webkit-text-stroke:0.25px #000;">3</div><svg class="abs" style="left:277.85px;top:76.70px" width="28" height="28" viewBox="0 0 28 28"><circle cx="14" cy="14" r="11.15" fill="#fff" stroke="#cc0000" stroke-width="1.8"/></svg><div class="abs" style="left:279.85px;top:79.10px;width:24px;height:24px;line-height:24px;text-align:center;font-size:19.5px;color:#000;-webkit-text-stroke:0.25px #000;">4</div>
</body></html>
